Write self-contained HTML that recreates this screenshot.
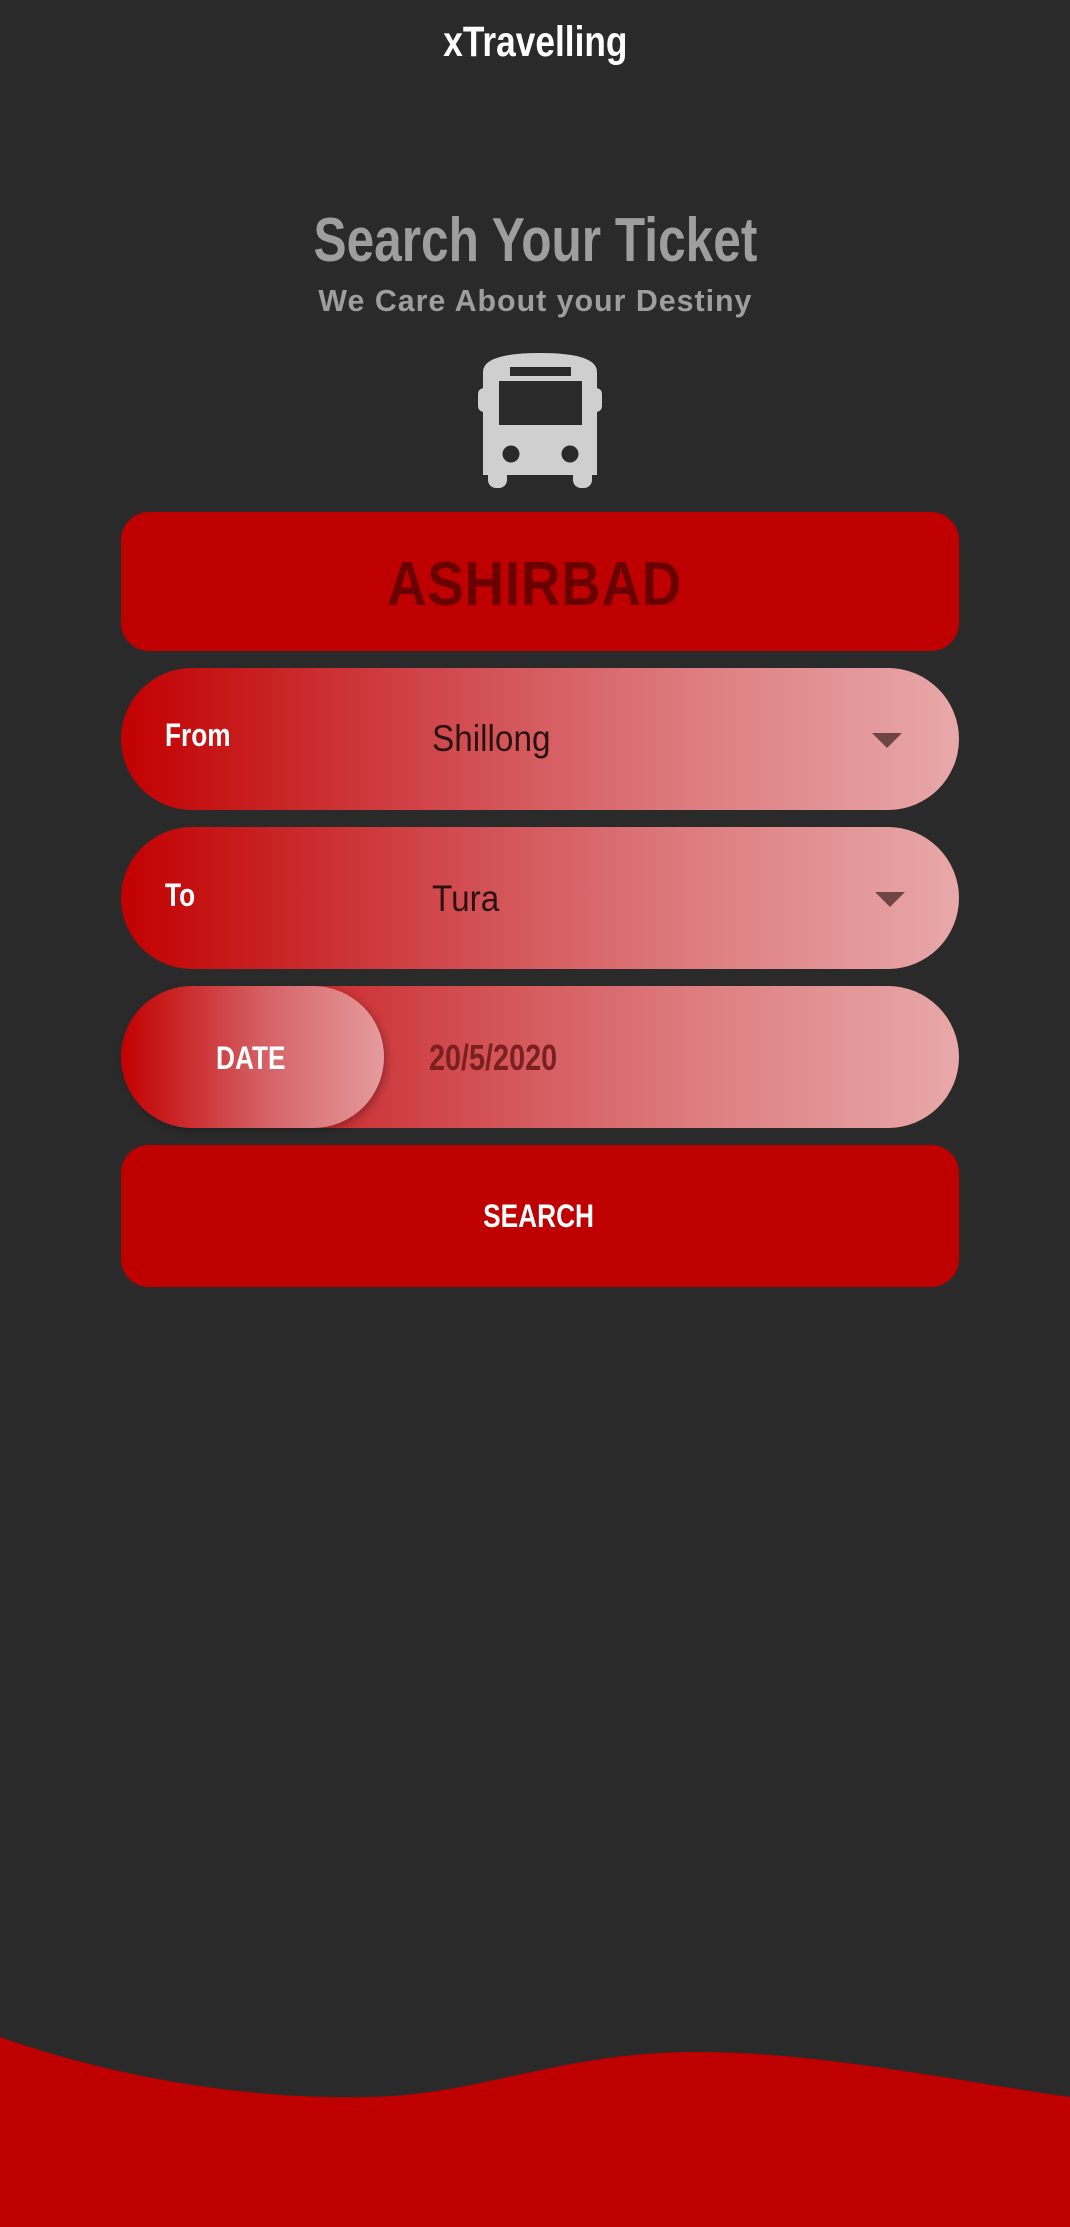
<!DOCTYPE html>
<html><head><meta charset="utf-8"><style>
*{margin:0;padding:0;box-sizing:border-box}
html,body{width:1070px;height:2227px;background:#2a2a2a;overflow:hidden;font-family:"Liberation Sans",sans-serif}
.abs{position:absolute}
.c{position:absolute;left:0;width:1070px;text-align:center;white-space:nowrap}
.n{display:inline-block;transform:scaleX(.82);font-weight:bold}
.pill{position:absolute;left:121px;width:838px;height:142px;border-radius:71px;background:linear-gradient(90deg,#c20000 0%,#cf4347 35%,#de7f82 70%,#e8a8a9 100%)}
.lbl{position:absolute;color:#fff;font-weight:bold;font-size:32px;transform:scaleX(.82);transform-origin:left center}
.val{position:absolute;left:432px;color:#2a1212;font-size:37px;transform:scaleX(.9);transform-origin:left center}
.tri{position:absolute;width:0;height:0;border-left:15px solid transparent;border-right:15px solid transparent;border-top:15px solid #6e4444}
</style></head><body>
<div class="c" style="top:18px;color:#fff;font-size:43px"><span class="n">xTravelling</span></div>
<div class="c" style="top:205px;color:#9e9e9e;font-size:62px"><span class="n" style="transform:scaleX(.8)">Search Your Ticket</span></div>
<div class="c" style="top:283px;color:#9e9e9e;font-size:31px"><span class="n" style="transform:scaleX(.98);letter-spacing:1px">We Care About your Destiny</span></div>
<svg class="abs" style="left:0;top:0" width="1070" height="520">
<g fill="#cfcfcf">
<path d="M483 372 Q483 353 540 353 Q597 353 597 372 L597 475 L483 475 Z"/>
<rect x="478" y="388" width="124" height="24" rx="6"/>
<rect x="488" y="465" width="19" height="23" rx="8"/>
<rect x="573" y="465" width="19" height="23" rx="8"/>
</g>
<g fill="#2a2a2a">
<rect x="510" y="367" width="61" height="9"/>
<rect x="499" y="381" width="83" height="44"/>
<circle cx="511" cy="454" r="8.5"/><circle cx="570" cy="454" r="8.5"/>
</g>
</svg>
<div class="abs" style="left:121px;top:512px;width:838px;height:139px;border-radius:28px;background:#bf0000"></div>
<div class="c" style="top:549px;color:#6a0000;font-size:62px;font-weight:bold"><span style="display:inline-block;transform:scaleX(.88);letter-spacing:1px">ASHIRBAD</span></div>

<div class="pill" style="top:668px"></div>
<div class="lbl" style="left:165px;top:717px">From</div>
<div class="val" style="top:718px">Shillong</div>
<div class="tri" style="left:872px;top:733px"></div>

<div class="pill" style="top:827px"></div>
<div class="lbl" style="left:165px;top:877px">To</div>
<div class="val" style="top:878px">Tura</div>
<div class="tri" style="left:875px;top:892px"></div>

<div class="pill" style="top:986px"></div>
<div class="abs" style="left:121px;top:986px;width:263px;height:142px;border-radius:71px;background:linear-gradient(90deg,#c20000 0%,#d56166 55%,#e59c9e 100%);box-shadow:3px 3px 8px rgba(0,0,0,.25)"></div>
<div class="lbl" style="left:216px;top:1040px">DATE</div>
<div class="abs" style="left:429px;top:1037px;color:#7a2020;font-size:36px;font-weight:bold;transform:scaleX(.8);transform-origin:left center">20/5/2020</div>

<div class="abs" style="left:121px;top:1145px;width:838px;height:142px;border-radius:28px;background:#bf0000"></div>
<div class="c" style="top:1198px;left:4px;color:#fff;font-size:32px"><span class="n">SEARCH</span></div>

<svg class="abs" style="left:0;top:2000px" width="1070" height="227">
<path d="M0 37 C120 80 260 100 369 97 C480 95 560 52 696 52 C820 52 950 80 1070 97 L1070 227 L0 227 Z" fill="#bf0000"/>
</svg>
</body></html>
